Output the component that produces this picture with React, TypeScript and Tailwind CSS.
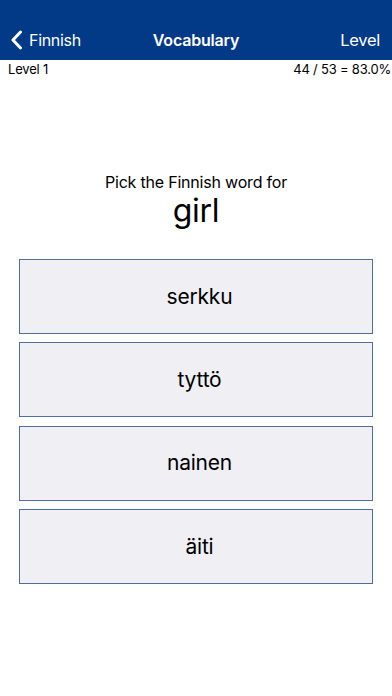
import React from "react";

const options = ["serkku", "tyttö", "nainen", "äiti"];

export default function App() {
  return (
    <div
      className="w-[392px] h-[696px] bg-white flex flex-col text-black"
      style={{ fontFamily: "Inter, 'Noto Sans', sans-serif" }}
    >
      <div className="bg-[#023a88] h-[60px] pt-[20px] flex flex-col">
        <div className="h-[40px] flex items-center justify-between px-[10px] text-white">
          <div className="flex items-center gap-[6px] w-[120px]">
            <svg width="13" height="20" viewBox="0 0 13 20" fill="none">
              <path d="M10.5 2 L3 10 L10.5 18" stroke="white" strokeWidth="3" strokeLinecap="round" strokeLinejoin="round" />
            </svg>
            <span className="text-[16px] tracking-[-0.3px]">Finnish</span>
          </div>
          <div className="text-[16px] font-semibold tracking-[-0.2px]">Vocabulary</div>
          <div className="w-[120px] text-right text-[16.5px] pr-[2px] tracking-[-0.3px]">Level</div>
        </div>
      </div>
      <div className="h-[20px] flex items-center justify-between pl-[8px] pr-[1px] text-[13px] tracking-[-0.2px]">
        <span>Level 1</span>
        <span>44 / 53 = 83.0%</span>
      </div>
      <div className="flex flex-col items-center pt-[92px]">
        <div className="text-[16px] leading-[20px] tracking-[-0.2px]">Pick the Finnish word for</div>
        <div className="text-[32px] leading-[38px] tracking-[-0.3px]">girl</div>
      </div>
      <div className="flex flex-col gap-[8.33px] px-[19px] mt-[29px]">
        {options.map((o) => (
          <div
            key={o}
            className="h-[75px] border border-[#4f6e9c] bg-[#efeff4] flex items-center justify-center pl-[7px] text-[21px] tracking-[-0.2px]"
          >
            {o}
          </div>
        ))}
      </div>
    </div>
  );
}
